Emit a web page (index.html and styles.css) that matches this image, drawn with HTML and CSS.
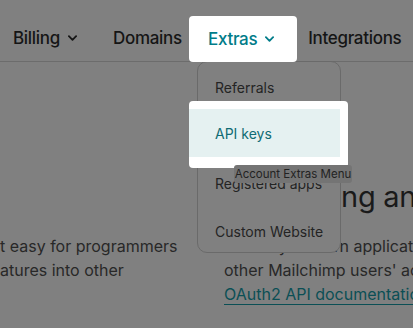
FILE: index.html
```html
<!DOCTYPE html>
<html>
<head>
<meta charset="utf-8">
<link rel="stylesheet" href="styles.css">
</head>
<body>
<div class="page">
  <nav class="nav">
    <span class="nav-item item-billing">Billing <svg class="chev" viewBox="0 0 10 6"><path d="M1 1l4 4 4-4"/></svg></span>
    <span class="nav-item item-domains">Domains</span>
    <span class="nav-item item-extras">Extras <svg class="chev" viewBox="0 0 10 6"><path d="M1 1l4 4 4-4"/></svg></span>
    <span class="nav-item item-integrations">Integrations</span>
  </nav>
  <main class="content">
    <section class="col col-left">
      <p class="body">t easy for programmers<br>atures into other</p>
    </section>
    <section class="col col-right">
      <h2 class="heading">Registering an app</h2>
      <p class="body">Create your own application to access<br>other Mailchimp users' accounts.<br><a class="link" href="#">OAuth2 API documentation</a></p>
    </section>
  </main>

  <div class="dropdown">
    <div class="dd-item">Referrals</div>
    <div class="dd-item">API keys</div>
    <div class="dd-item">Registered apps</div>
    <div class="dd-item">Custom Website</div>
  </div>

  <div class="spot spot-extras">
    <span class="spot-extras-label">Extras <svg class="chev" viewBox="0 0 10 6"><path d="M1 1l4 4 4-4"/></svg></span>
  </div>
  <div class="spot spot-api">
    <div class="spot-api-item">API keys</div>
  </div>
  <div class="tooltip">Account Extras Menu</div>
</div>
</body>
</html>
```

FILE: styles.css
```css
* { box-sizing: border-box; }
html, body { margin: 0; padding: 0; }
body {
  background: #808080;
  font-family: Inter, "Noto Sans", "Liberation Sans", sans-serif;
  width: 413px;
  height: 328px;
  overflow: hidden;
}
.page {
  position: relative;
  width: 413px;
  height: 328px;
  overflow: hidden;
}
.nav {
  display: flex;
  align-items: center;
  height: 62px;
  padding: 14px 0 0 13px;
  border-bottom: 1px solid #6c6c6c;
  white-space: nowrap;
}
.nav-item {
  display: flex;
  align-items: center;
  font-size: 17px;
  font-weight: 500;
  color: #151515;
  letter-spacing: -0.3px;
}
.item-domains { margin-left: 36px; }
.item-extras { margin-left: 29px; color: #004a50; }
.item-integrations { margin-left: 31px; }
.chev {
  width: 9px;
  height: 6px;
  margin-left: 8px;
  fill: none;
  stroke: currentColor;
  stroke-width: 2;
  stroke-linecap: round;
  stroke-linejoin: round;
}
.content {
  display: flex;
  padding-top: 120px;
}
.col-left { flex: none; width: 224px; }
.col-right { flex: 1; min-width: 0; }
.body {
  margin: 0;
  font-size: 16px;
  line-height: 24px;
  color: #282828;
  white-space: nowrap;
}
.col-left .body { padding-top: 52px; }
.heading {
  margin: 0 0 22px 0;
  font-size: 29px;
  font-weight: 400;
  line-height: 30px;
  color: #1a1a1a;
  white-space: nowrap;
  letter-spacing: -0.3px;
}
.link {
  color: #0b4f55;
  text-decoration: underline;
  text-underline-offset: 4px;
}
.dropdown {
  position: absolute;
  left: 197px;
  top: 61px;
  width: 144px;
  height: 192px;
  background: #808080;
  border: 1px solid #6a6a6a;
  border-radius: 10px;
  padding-top: 1px;
}
.dd-item {
  height: 48px;
  display: flex;
  align-items: center;
  padding-left: 17px;
  font-size: 14px;
  color: #242424;
}
.spot {
  position: absolute;
  background: #ffffff;
  border-radius: 4px;
}
.spot-extras {
  left: 189px;
  top: 16px;
  width: 108px;
  height: 46px;
  padding: 12px 0 0 19px;
}
.spot-extras-label {
  display: flex;
  align-items: center;
  height: 22px;
  font-size: 17px;
  font-weight: 500;
  color: #007c89;
  letter-spacing: -0.3px;
}
.spot-api {
  left: 189px;
  top: 101px;
  width: 159px;
  height: 67px;
  padding-top: 8px;
}
.spot-api-item {
  width: 151px;
  height: 48px;
  background: #e5f1f1;
  display: flex;
  align-items: center;
  padding-left: 26px;
  font-size: 14px;
  color: #0f6c74;
}
.tooltip {
  position: absolute;
  left: 234px;
  top: 165px;
  width: 118px;
  height: 18px;
  background: #747474;
  border-radius: 3px;
  font-size: 11.5px;
  line-height: 18px;
  color: #222222;
  text-align: center;
  white-space: nowrap;
}
```
